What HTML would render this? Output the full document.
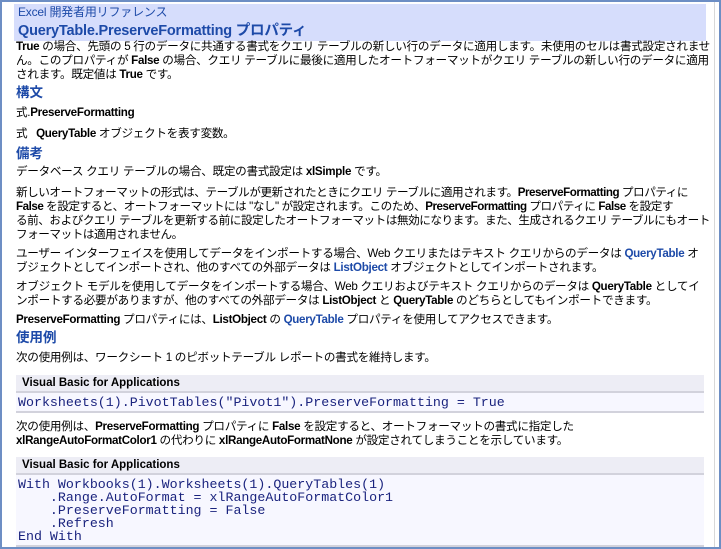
<!DOCTYPE html><html><head><meta charset="utf-8"><style>
html,body{margin:0;padding:0;width:721px;height:549px;overflow:hidden;background:#fff}
body{font-family:"Liberation Sans","Noto Sans CJK JP",sans-serif;font-size:12px;color:#000;position:relative}
.frame{position:absolute;left:0;top:0;width:717px;height:545px;border:2px solid #6d8ec4;border-left-width:2px}
.sb{position:absolute;left:714px;top:2px;width:1px;height:545px;background:#d8d8d8}
.b{position:absolute;left:16px;line-height:14px;white-space:nowrap;letter-spacing:-0.3px;font-size:11.6px}
.hdr{position:absolute;left:14px;top:4px;width:692px;height:37px;background:#d6ddfc}
.h1{position:absolute;left:18px;top:4px;color:#1d4aa8;font-size:12px;line-height:16px;letter-spacing:-0.2px}
.h2{position:absolute;left:18px;top:22px;color:#1d4aa8;font-size:14.5px;font-weight:bold;line-height:18px;letter-spacing:-0.2px}
.hh{position:absolute;left:16px;color:#1d4aa8;font-size:13.5px;font-weight:bold;line-height:16px}
b{font-weight:bold}
a{color:#1d4aa8;font-weight:bold;text-decoration:none}
.cb{position:absolute;left:16px;width:688px}
.ch{background:#ededf5;border-bottom:2px solid #d2d2dc;height:16px;font-weight:bold;font-size:11.5px;line-height:16px;padding-left:6px;color:#000}
.cc{background:#f7f7ff;border-bottom:2px solid #d2d2dc;font-family:"Liberation Mono",monospace;font-size:13.3px;color:#1a237e;line-height:13px;padding:3px 0 0 2px;white-space:pre}
</style></head><body>
<div class="frame"></div><div class="sb"></div>
<div class="hdr"></div>
<div class="h1">Excel 開発者用リファレンス</div>
<div class="h2">QueryTable.PreserveFormatting プロパティ</div>
<div class="b" style="top:40px"><b>True</b> の場合、先頭の 5 行のデータに共通する書式をクエリ テーブルの新しい行のデータに適用します。未使用のセルは書式設定されませ<br>ん。このプロパティが <b>False</b> の場合、クエリ テーブルに最後に適用したオートフォーマットがクエリ テーブルの新しい行のデータに適用<br>されます。既定値は <b>True</b> です。</div>
<div class="hh" style="top:85px">構文</div>
<div class="b" style="top:106px">式.<b>PreserveFormatting</b></div>
<div class="b" style="top:127px">式&nbsp;&nbsp;&nbsp;<b>QueryTable</b> オブジェクトを表す変数。</div>
<div class="hh" style="top:146px">備考</div>
<div class="b" style="top:165px">データベース クエリ テーブルの場合、既定の書式設定は <b>xlSimple</b> です。</div>
<div class="b" style="top:186px;letter-spacing:-0.45px">新しいオートフォーマットの形式は、テーブルが更新されたときにクエリ テーブルに適用されます。<b>PreserveFormatting</b> プロパティに<br><b>False</b> を設定すると、オートフォーマットには "なし" が設定されます。このため、<b>PreserveFormatting</b> プロパティに <b>False</b> を設定す<br>る前、およびクエリ テーブルを更新する前に設定したオートフォーマットは無効になります。また、生成されるクエリ テーブルにもオート<br>フォーマットは適用されません。</div>
<div class="b" style="top:247px">ユーザー インターフェイスを使用してデータをインポートする場合、Web クエリまたはテキスト クエリからのデータは <a>QueryTable</a> オ<br>ブジェクトとしてインポートされ、他のすべての外部データは <a>ListObject</a> オブジェクトとしてインポートされます。</div>
<div class="b" style="top:280px">オブジェクト モデルを使用してデータをインポートする場合、Web クエリおよびテキスト クエリからのデータは <b>QueryTable</b> としてイ<br>ンポートする必要がありますが、他のすべての外部データは <b>ListObject</b> と <b>QueryTable</b> のどちらとしてもインポートできます。</div>
<div class="b" style="top:313px"><b>PreserveFormatting</b> プロパティには、<b>ListObject</b> の <a>QueryTable</a> プロパティを使用してアクセスできます。</div>
<div class="hh" style="top:330px">使用例</div>
<div class="b" style="top:351px">次の使用例は、ワークシート 1 のピボットテーブル レポートの書式を維持します。</div>
<div class="cb" style="top:375px"><div class="ch">Visual Basic for Applications</div><div class="cc" style="height:15px">Worksheets(1).PivotTables("Pivot1").PreserveFormatting = True</div></div>
<div class="b" style="top:420px">次の使用例は、<b>PreserveFormatting</b> プロパティに <b>False</b> を設定すると、オートフォーマットの書式に指定した<br><b>xlRangeAutoFormatColor1</b> の代わりに <b>xlRangeAutoFormatNone</b> が設定されてしまうことを示しています。</div>
<div class="cb" style="top:457px"><div class="ch">Visual Basic for Applications</div><div class="cc" style="height:67px">With Workbooks(1).Worksheets(1).QueryTables(1)
    .Range.AutoFormat = xlRangeAutoFormatColor1
    .PreserveFormatting = False
    .Refresh
End With</div></div>
</body></html>
